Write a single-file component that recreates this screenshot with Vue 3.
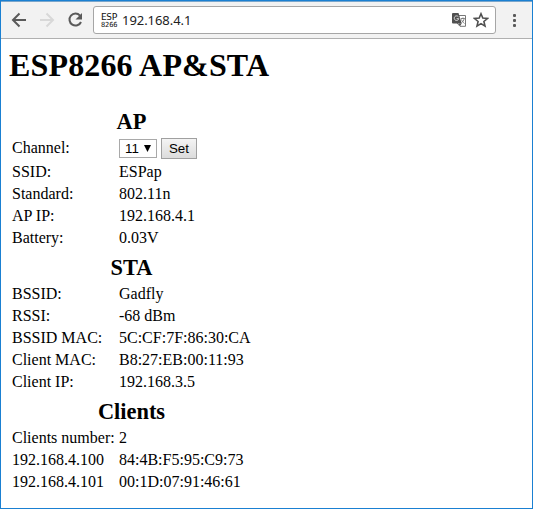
<script setup>
import { ref } from 'vue'

const channel = ref('11')
const sections = [
  {
    title: 'AP',
    rows: [
      ['Channel:', null],
      ['SSID:', 'ESPap'],
      ['Standard:', '802.11n'],
      ['AP IP:', '192.168.4.1'],
      ['Battery:', '0.03V'],
    ],
  },
  {
    title: 'STA',
    rows: [
      ['BSSID:', 'Gadfly'],
      ['RSSI:', '-68 dBm'],
      ['BSSID MAC:', '5C:CF:7F:86:30:CA'],
      ['Client MAC:', 'B8:27:EB:00:11:93'],
      ['Client IP:', '192.168.3.5'],
    ],
  },
  {
    title: 'Clients',
    rows: [
      ['Clients number:', '2'],
      ['192.168.4.100', '84:4B:F5:95:C9:73'],
      ['192.168.4.101', '00:1D:07:91:46:61'],
    ],
  },
]
</script>

<template>
  <div class="window">
    <header class="toolbar">
      <svg class="nav back" width="16" height="16" viewBox="0 0 16 16">
        <path d="M15 8H2.5M8.5 1.5L2 8l6.5 6.5" />
      </svg>
      <svg class="nav forward" width="16" height="16" viewBox="0 0 16 16">
        <path d="M1 8h12.5M7.5 1.5L14 8l-6.5 6.5" />
      </svg>
      <svg class="nav reload" width="16" height="16" viewBox="0 0 16 16">
        <path d="M13 3.6A6 6 0 1 0 14 10" />
        <path class="solid" d="M15 1v6.5H8.5z" />
      </svg>
      <div class="address">
        <div class="favicon"><span class="fav-top">ESP</span><span class="fav-bottom">8266</span></div>
        <span class="url">192.168.4.1</span>
        <svg class="translate" width="14" height="14" viewBox="0 0 14 14">
          <path d="M5 2.5h8.5v10.8H8L5 10z" fill="#fff" stroke="#777" />
          <path d="M1 0h5.5l3.2 10.5H1a1 1 0 0 1-1-1V1a1 1 0 0 1 1-1z" fill="#505050" />
          <path d="M6.4 3.8A2.3 2.3 0 1 0 6.8 5.7H4.6" fill="none" stroke="#ddd" stroke-width="1" />
          <path d="M6.5 10.5h3.2L8 13.3z" fill="#505050" />
          <path d="M8.8 5.5h4M11 4.5v1M12.2 5.5c-.4 2-1.3 3.3-2.8 4.4M9.5 6.5c.6 1.8 1.5 2.8 3 4" fill="none" stroke="#777" stroke-width=".9" />
        </svg>
        <svg class="star" width="16" height="16" viewBox="0 0 16 16">
          <path d="M8 1.8l1.8 4.3 4.6.4-3.5 3 1.1 4.6L8 11.6l-4 2.5 1.1-4.6-3.5-3 4.6-.4z" />
        </svg>
      </div>
      <div class="menu"><i></i><i></i><i></i></div>
    </header>
    <main class="page">
      <h1>ESP8266 AP&amp;STA</h1>
      <section v-for="s in sections" :key="s.title">
        <h2>{{ s.title }}</h2>
        <div v-for="r in s.rows" :key="r[0]" class="row" :class="{ control: r[1] === null }">
          <span>{{ r[0] }}</span>
          <span v-if="r[1] !== null">{{ r[1] }}</span>
          <div v-else class="controls">
            <div class="select">
              <span>{{ channel }}</span>
              <svg width="7" height="7" viewBox="0 0 7 7"><path d="M0 0h7L3.5 7z" /></svg>
            </div>
            <button type="button">Set</button>
          </div>
        </div>
      </section>
    </main>
  </div>
</template>

<style>
body {
  margin: 0;
  overflow: hidden;
}
</style>

<style scoped>
.window {
  box-sizing: border-box;
  width: 533px;
  height: 509px;
  border: 1px solid #1a80d2;
  background: #fff;
  color: #000;
}
.toolbar {
  box-sizing: border-box;
  height: 38px;
  display: flex;
  align-items: center;
  padding: 0 16px 0 10px;
  background: #f2f2f2;
  border-top: 1px solid #79a5cb;
  border-bottom: 1px solid #b0b0b0;
}
.nav {
  flex: none;
  fill: none;
  stroke: #5a5a5a;
  stroke-width: 2;
}
.forward {
  margin-left: 12px;
  stroke: #d8d8d8;
}
.reload {
  margin-left: 12px;
}
.nav .solid {
  fill: #5a5a5a;
  stroke: none;
}
.address {
  box-sizing: border-box;
  width: 403px;
  height: 28px;
  margin-left: 10px;
  padding: 0 6px 0 7px;
  display: flex;
  align-items: center;
  background: #fff;
  border: 1px solid #a6a6a6;
  border-radius: 3px;
}
.favicon {
  width: 16px;
  height: 16px;
  display: flex;
  flex-direction: column;
  font-family: "DejaVu Sans Mono", monospace;
  color: #111;
}
.fav-top {
  font-size: 9.5px;
  line-height: 10px;
  letter-spacing: -0.4px;
}
.fav-bottom {
  font-size: 7px;
  line-height: 7px;
  letter-spacing: -0.1px;
}
.url {
  flex: 1;
  margin-left: 5px;
  font: 13px/18px "Noto Sans", sans-serif;
  letter-spacing: -0.05px;
  color: #222;
}
.translate {
  margin-right: 7px;
}
.star {
  fill: none;
  stroke: #505050;
  stroke-width: 1.6;
}
.menu {
  margin-left: auto;
  display: flex;
  flex-direction: column;
  gap: 2px;
}
.menu i {
  width: 3px;
  height: 3px;
  border-radius: 1px;
  background: #5a5a5a;
}
.page {
  padding: 8px 8px 0;
  font: 16px/22px "Liberation Serif", serif;
}
h1 {
  margin: 0;
  height: 56px;
  font-size: 32px;
  line-height: 37px;
  letter-spacing: 0.15px;
}
section {
  width: 245px;
}
h2 {
  margin: 0;
  height: 34px;
  font-size: 22.4px;
  line-height: 37px;
  text-align: center;
}
.row {
  display: grid;
  grid-template-columns: 107px 1fr;
  height: 22px;
  padding-left: 3px;
  white-space: nowrap;
}
.row.control {
  height: 24px;
}
.controls {
  display: flex;
  align-items: center;
  gap: 4px;
  height: 23px;
  font: 13.333px/15px "Liberation Sans", sans-serif;
}
.select {
  box-sizing: border-box;
  width: 38px;
  height: 19px;
  display: flex;
  align-items: center;
  justify-content: space-between;
  padding: 0 5px;
  border: 1px solid #a9a9a9;
}
button {
  box-sizing: border-box;
  width: 36px;
  height: 21px;
  padding: 0;
  border: 1px solid #a0a0a0;
  border-radius: 0;
  background: linear-gradient(#f4f4f4, #dcdcdc);
  font: inherit;
  color: #000;
}
</style>
